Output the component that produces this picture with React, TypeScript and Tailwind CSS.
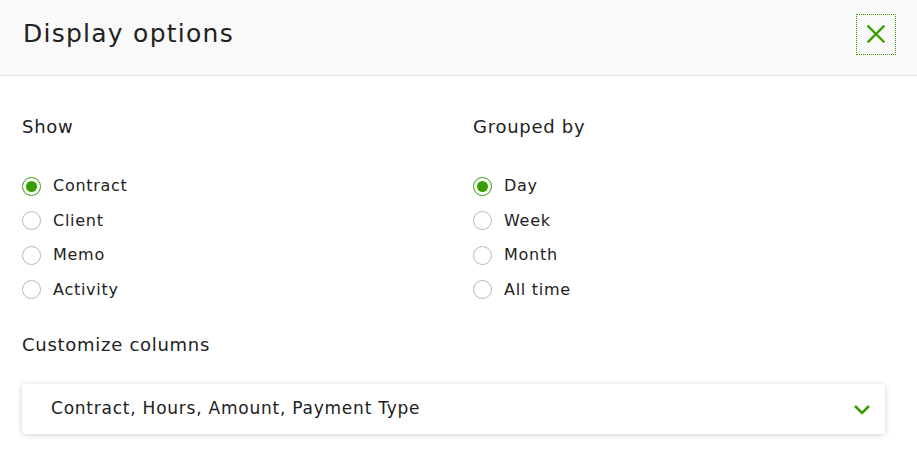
import { useState } from 'react'

const SHOW = ['Contract', 'Client', 'Memo', 'Activity']
const GROUPED = ['Day', 'Week', 'Month', 'All time']

interface RadioGroupProps {
  title: string
  options: string[]
  value: string
  onChange: (v: string) => void
}

function RadioGroup({ title, options, value, onChange }: RadioGroupProps) {
  return (
    <div>
      <h3 className="text-[18px] leading-[24px] tracking-[0.04em] text-[#222]">{title}</h3>
      <ul className="mt-[36px] flex flex-col gap-[12.5px]">
        {options.map((opt) => {
          const checked = opt === value
          return (
            <li key={opt}>
              <label className="flex cursor-pointer items-center gap-[12px]" onClick={() => onChange(opt)}>
                <span
                  className={
                    checked
                      ? 'flex h-[19px] w-[19px] items-center justify-center rounded-full border-[1.5px] border-[#37a000] bg-white'
                      : 'flex h-[19px] w-[19px] items-center justify-center rounded-full border border-[#b8b8b8] bg-white'
                  }
                >
                  {checked && <span className="h-[11px] w-[11px] rounded-full bg-[#37a000]" />}
                </span>
                <span className="text-[16px] leading-[22px] tracking-[0.045em] text-[#222]">{opt}</span>
              </label>
            </li>
          )
        })}
      </ul>
    </div>
  )
}

export default function App() {
  const [show, setShow] = useState('Contract')
  const [grouped, setGrouped] = useState('Day')

  return (
    <div className="h-[458px] w-[917px] bg-white" style={{ fontFamily: '"DejaVu Sans", "Noto Sans", sans-serif' }}>
      <header className="flex h-[76px] items-center justify-between border-b border-[#e0e0e0] bg-[#f9f9f9] pb-[7px] pl-[23px] pr-[21px]">
        <h2 className="text-[25px] leading-[30px] tracking-[0.05em] text-[#222]">Display options</h2>
        <button className="flex h-[41px] w-[40px] items-center justify-center border border-dotted border-[#37a000]">
          <svg width="20" height="20" viewBox="0 0 20 20" fill="none" stroke="#37a000" strokeWidth="2.4" strokeLinecap="square">
            <path d="M2.5 2.5l15 15M17.5 2.5l-15 15" />
          </svg>
        </button>
      </header>

      <div className="px-[22px] pt-[39px]">
        <div className="grid grid-cols-[451px_1fr]">
          <RadioGroup title="Show" options={SHOW} value={show} onChange={setShow} />
          <RadioGroup title="Grouped by" options={GROUPED} value={grouped} onChange={setGrouped} />
        </div>

        <h3 className="mt-[32px] text-[18px] leading-[24px] tracking-[0.04em] text-[#222]">Customize columns</h3>

        <button className="mt-[27px] flex h-[50px] w-[863px] items-center justify-between rounded-[3px] bg-white pl-[29px] pr-[14px] shadow-[0_1px_6px_rgba(0,0,0,0.18)]">
          <span className="text-[17px] tracking-[0.045em] text-[#222]">Contract, Hours, Amount, Payment Type</span>
          <svg width="18" height="12" viewBox="0 0 18 12" fill="none" stroke="#37a000" strokeWidth="2.6">
            <path d="M2 3l7 7 7-7" />
          </svg>
        </button>
      </div>
    </div>
  )
}
